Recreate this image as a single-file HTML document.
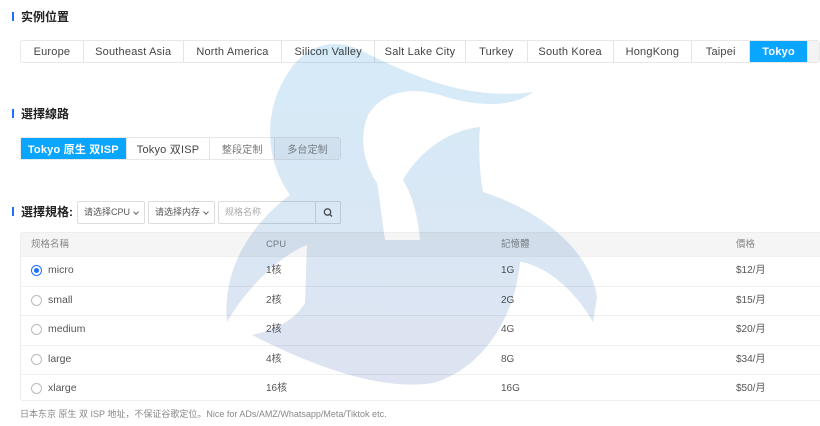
<!DOCTYPE html>
<html><head><meta charset="utf-8"><style>
*{box-sizing:border-box;margin:0;padding:0}
body{width:820px;height:426px;overflow:hidden;background:#fff;font-family:"Liberation Sans","Noto Sans CJK SC",sans-serif;color:#333;position:relative}
.h{position:absolute;left:12px;font-size:12px;font-weight:bold;color:#222;padding-left:9px;line-height:14px}
.h:before{content:"";position:absolute;left:0;top:2px;width:2px;height:9px;background:#1e6fff}
.tabs{position:absolute;display:flex;border:1px solid #e8e8e8;border-radius:3px;background:#fff}
.tabs div{border-right:1px solid #e4e4e4;display:flex;align-items:center;justify-content:center;font-size:11px;color:#444;letter-spacing:.2px}
.tabs .on{background:#0aa5ff;color:#fff;font-weight:bold}
.sel{position:absolute;top:201px;height:23px;border:1px solid #ddd;border-radius:2px;font-size:9px;color:#555;padding-left:6px;line-height:21px}
.sel.c:after{content:"";position:absolute;right:6px;top:8px;width:3px;height:3px;border-right:1px solid #666;border-bottom:1px solid #666;transform:rotate(45deg)}
.tbl{position:absolute;left:20px;top:232px;width:805px;height:169px;border:1px solid #eee;border-radius:3px}
.tr{position:absolute;left:0;width:100%;font-size:10px;color:#555;border-bottom:1px solid #f0f0f0}
.tr span{position:absolute;top:0;line-height:inherit}
.r{position:absolute;left:10px;width:11px;height:11px;border:1px solid #bbb;border-radius:50%}
.r.on{border-color:#1e6fff}
.r.on:after{content:"";position:absolute;left:2px;top:2px;width:5px;height:5px;border-radius:50%;background:#1e6fff}
svg.w{position:absolute;left:0;top:0;mix-blend-mode:multiply;pointer-events:none}
</style></head><body>
<div class="h" style="top:10px">实例位置</div>
<div class="tabs" style="left:20px;top:40px;height:23px;width:800px">
<div style="width:63px">Europe</div><div style="width:100px">Southeast Asia</div><div style="width:99px">North America</div><div style="width:93px">Silicon Valley</div><div style="width:91px">Salt Lake City</div><div style="width:62px">Turkey</div><div style="width:86px">South Korea</div><div style="width:79px">HongKong</div><div style="width:58px">Taipei</div><div class="on" style="width:58px">Tokyo</div><div style="width:11px;background:#f3f3f3;border:0"></div>
</div>
<div class="h" style="top:107px">選擇線路</div>
<div class="tabs" style="left:20px;top:137px;height:23px;width:321px">
<div class="on" style="width:106px">Tokyo 原生 双ISP</div><div style="width:84px">Tokyo 双ISP</div><div style="width:65px;color:#777;font-size:10px">整段定制</div><div style="width:65px;color:#888;font-size:10px;background:#f7f7f7;border:0">多台定制</div>
</div>
<div class="h" style="top:205px">選擇規格:</div>
<div class="sel c" style="left:77px;width:68px">请选择CPU</div>
<div class="sel c" style="left:148px;width:67px">请选择内存</div>
<div class="sel" style="left:218px;width:98px;color:#aaa;border-right:0">规格名称</div>
<div class="sel" style="left:315px;width:26px;padding:0"><svg width="24" height="21" viewBox="0 0 24 21"><circle cx="11.5" cy="10" r="3.2" fill="none" stroke="#555" stroke-width="1.3"/><path d="M14 12.5 L16 14.5" stroke="#555" stroke-width="1.4"/></svg></div>
<div class="tbl">
<div class="tr" style="top:0;height:24px;line-height:24px;background:#f5f5f5;color:#888;font-size:9.5px"><span style="left:10px">规格名稱</span><span style="left:245px">CPU</span><span style="left:480px">記憶體</span><span style="left:715px">價格</span></div>
<div class="tr" style="top:24px;height:30px;line-height:27px"><i class="r on" style="top:8px"></i><span style="left:27px;font-size:10.5px">micro</span><span style="left:245px">1核</span><span style="left:480px">1G</span><span style="left:715px">$12/月</span></div>
<div class="tr" style="top:54px;height:29px;line-height:27px"><i class="r" style="top:8px"></i><span style="left:27px;font-size:10.5px">small</span><span style="left:245px">2核</span><span style="left:480px">2G</span><span style="left:715px">$15/月</span></div>
<div class="tr" style="top:83px;height:30px;line-height:27px"><i class="r" style="top:8px"></i><span style="left:27px;font-size:10.5px">medium</span><span style="left:245px">2核</span><span style="left:480px">4G</span><span style="left:715px">$20/月</span></div>
<div class="tr" style="top:113px;height:29px;line-height:27px"><i class="r" style="top:8px"></i><span style="left:27px;font-size:10.5px">large</span><span style="left:245px">4核</span><span style="left:480px">8G</span><span style="left:715px">$34/月</span></div>
<div class="tr" style="top:142px;height:27px;line-height:27px;border:0"><i class="r" style="top:8px"></i><span style="left:27px;font-size:10.5px">xlarge</span><span style="left:245px">16核</span><span style="left:480px">16G</span><span style="left:715px">$50/月</span></div>
</div>
<div style="position:absolute;left:20px;top:407px;font-size:9px;color:#888">日本东京 原生 双 ISP 地址，不保证谷歌定位。Nice for ADs/AMZ/Whatsapp/Meta/Tiktok etc.</div>
<svg class="w" width="820" height="426" viewBox="0 0 820 426">
<defs><linearGradient id="g" x1="0" y1="0" x2="0" y2="1"><stop offset="0" stop-color="#d6ebf8"/><stop offset="1" stop-color="#dde3f1"/></linearGradient></defs>
<path fill="url(#g)" fill-rule="evenodd" d="M227,322 C222,270 250,225 290,195 C265,160 262,110 290,70 C310,40 340,40 360,50 C420,80 470,100 533,92 C510,110 470,105 440,95 C405,85 380,95 368,115 C358,140 365,165 377,183 L403,180 C420,150 450,130 480,127 C478,150 480,175 483,192 C540,210 590,250 597,297 L593,322 C575,290 545,265 520,262 C515,320 480,370 433,383 C390,390 330,375 252,335 C275,330 295,320 305,303 L307,245 C280,255 245,290 227,322 Z M377,183 L403,180 C412,195 418,215 420,240 L385,240 C382,220 380,200 377,183 Z"/>
</svg>
</body></html>
